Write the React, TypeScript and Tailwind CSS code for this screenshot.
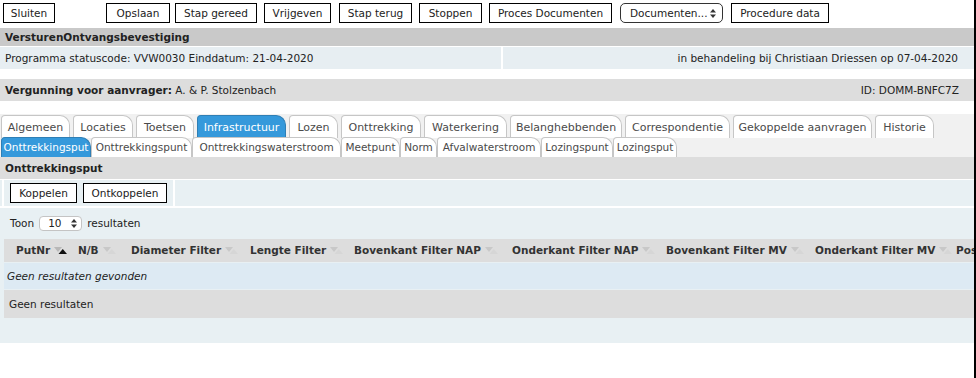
import React from "react";

const SortIcon = ({ active }: { active?: boolean }) => (
  <svg width="14" height="8" viewBox="0 0 14 8" className="ml-[4px] shrink-0">
    <polygon points="0,0 8,0 4,5" fill={active ? "#b8b8b8" : "#c8c8c8"} />
    <polygon points="4.5,7 13,7 8.75,2" fill={active ? "#111111" : "#d6d6d6"} />
  </svg>
);

const UpDown = ({ color = "#333" }: { color?: string }) => (
  <svg width="6" height="9" viewBox="0 0 6 9" className="shrink-0">
    <polygon points="0,3.5 6,3.5 3,0" fill={color} />
    <polygon points="0,5.5 6,5.5 3,9" fill={color} />
  </svg>
);

const Btn = ({ label, cls }: { label: string; cls: string }) => (
  <div
    className={`h-[20px] bg-white border border-black flex items-center justify-center text-[#222] whitespace-nowrap ${cls}`}
  >
    {label}
  </div>
);

type Tab = [string, number, boolean?];

const tabs1: Tab[] = [
  ["Algemeen", 69],
  ["Locaties", 60],
  ["Toetsen", 58],
  ["Infrastructuur", 89, true],
  ["Lozen", 49],
  ["Onttrekking", 80],
  ["Waterkering", 83],
  ["Belanghebbenden", 112],
  ["Correspondentie", 105],
  ["Gekoppelde aanvragen", 139],
  ["Historie", 59],
];

const tabs2: Tab[] = [
  ["Onttrekkingsput", 90, true],
  ["Onttrekkingspunt", 101],
  ["Onttrekkingswaterstroom", 149],
  ["Meetpunt", 59],
  ["Norm", 37],
  ["Afvalwaterstroom", 104],
  ["Lozingspunt", 72],
  ["Lozingsput", 64],
];

const cols: [string, number, boolean?][] = [
  ["PutNr", 62, true],
  ["N/B", 53],
  ["Diameter Filter", 119],
  ["Lengte Filter", 104],
  ["Bovenkant Filter NAP", 158],
  ["Onderkant Filter NAP", 154],
  ["Bovenkant Filter MV", 149],
  ["Onderkant Filter MV", 141],
  ["Positie", 120],
];

export default function App() {
  return (
    <div className="relative w-[976px] h-[378px] bg-white overflow-hidden font-['DejaVu_Sans',Verdana,sans-serif] text-[10.5px] text-[#222] leading-none">
      <div className="w-[974px] h-full overflow-hidden">
        {/* toolbar */}
        <div className="flex pt-[3px]">
          <Btn label="Sluiten" cls="ml-[3px] w-[52px]" />
          <Btn label="Opslaan" cls="ml-[51px] w-[64px]" />
          <Btn label="Stap gereed" cls="ml-[5px] w-[82px]" />
          <Btn label="Vrijgeven" cls="ml-[7px] w-[67px]" />
          <Btn label="Stap terug" cls="ml-[8px] w-[73px]" />
          <Btn label="Stoppen" cls="ml-[7px] w-[63px]" />
          <Btn label="Proces Documenten" cls="ml-[7px] w-[123px]" />
          <div className="ml-[8px] w-[103px] h-[20px] bg-white border border-[#333] rounded-[5px] flex items-center justify-between pl-[9px] pr-[6px] whitespace-nowrap">
            <span>Documenten...</span>
            <UpDown />
          </div>
          <Btn label="Procedure data" cls="ml-[8px] w-[98px]" />
        </div>

        {/* title */}
        <div className="mt-[5px] h-[18px] bg-[#c9c9c9] flex items-center pl-[5px] font-bold text-[#222]">
          VersturenOntvangsbevestiging
        </div>
        <div className="mt-[1px] h-[22px] flex">
          <div className="w-[501px] bg-[#e7eef2] flex items-center pl-[5px]">
            Programma statuscode: VVW0030 Einddatum: 21-04-2020
          </div>
          <div className="flex-1 ml-[2px] bg-[#e7eef2] flex items-center justify-end pr-[16px]">
            in behandeling bij Christiaan Driessen op 07-04-2020
          </div>
        </div>
        <div className="mt-[10px] h-[22px] bg-[#dddddd] flex items-center justify-between pl-[5px] pr-[15px]">
          <span>
            <b>Vergunning voor aanvrager:</b> A. &amp; P. Stolzenbach
          </span>
          <span>ID: DOMM-BNFC7Z</span>
        </div>

        {/* tabs */}
        <div className="mt-[13px] bg-[#f1f1f1] pt-[1px]">
          <div className="flex gap-[3px] pl-[1px] h-[23px] items-stretch">
            {tabs1.map(([t, w, a]) => (
              <div
                key={t}
                style={{ width: w }}
                className={`shrink-0 flex items-center justify-center whitespace-nowrap text-[11px] rounded-tr-[10px] rounded-tl-[4px] border border-b-0 ${
                  a
                    ? "bg-[#3599db] border-[#2f7fb5] text-white"
                    : "bg-white border-[#c6c6c6] text-[#4a4a4a]"
                }`}
              >
                {t}
              </div>
            ))}
          </div>
          <div className="flex pl-[1px] h-[20px] -mt-[1px] items-stretch">
            {tabs2.map(([t, w, a]) => (
              <div
                key={t}
                style={{ width: w }}
                className={`shrink-0 flex items-center justify-center whitespace-nowrap rounded-tr-[10px] rounded-tl-[4px] border border-b-0 ${
                  a
                    ? "bg-[#3599db] border-[#2f7fb5] text-white"
                    : "bg-white border-[#c6c6c6] text-[#4a4a4a]"
                }`}
              >
                {t}
              </div>
            ))}
          </div>
        </div>

        <div className="h-[22px] bg-[#dddddd] flex items-center pl-[5px] font-bold text-[#222]">
          Onttrekkingsput
        </div>

        {/* panel */}
        <div className="h-[164px] bg-[#e8f0f3]">
          <div className="h-[29px] flex border-t border-white border-b-2">
            <div className="w-[173px] border-l-2 border-r-2 border-white ml-[2px] flex items-center pl-[6px]">
              <Btn label="Koppelen" cls="w-[67px]" />
              <Btn label="Ontkoppelen" cls="ml-[6px] w-[84px]" />
            </div>
            <div className="flex-1" />
          </div>
          <div className="h-[31px] flex items-center pl-[10px] gap-[5px]">
            <span>Toon</span>
            <div className="w-[43px] h-[15px] bg-white border border-[#c4c4c4] rounded-[4px] flex items-center justify-between pl-[8px] pr-[4px]">
              <span>10</span>
              <UpDown />
            </div>
            <span>resultaten</span>
          </div>
          <div className="ml-[4px] w-[970px]">
            <div className="h-[23px] bg-[#dddddd] flex items-center w-[970px] overflow-hidden font-bold text-[#333]">
              {cols.map(([c, w, a]) => (
                <div
                  key={c}
                  style={{ width: w }}
                  className="shrink-0 flex items-center pl-[12px] whitespace-nowrap"
                >
                  {c}
                  <SortIcon active={a} />
                </div>
              ))}
            </div>
            <div className="mt-[1px] h-[26px] bg-[#ddeaf3] flex items-center pl-[3px] italic text-[#222]">
              Geen resultaten gevonden
            </div>
            <div className="mt-[1px] h-[28px] bg-[#dddddd] flex items-center pl-[5px]">
              Geen resultaten
            </div>
          </div>
        </div>
      </div>
      <div className="absolute top-0 right-0 w-[2px] h-[378px] bg-[#000000]" />
    </div>
  );
}
